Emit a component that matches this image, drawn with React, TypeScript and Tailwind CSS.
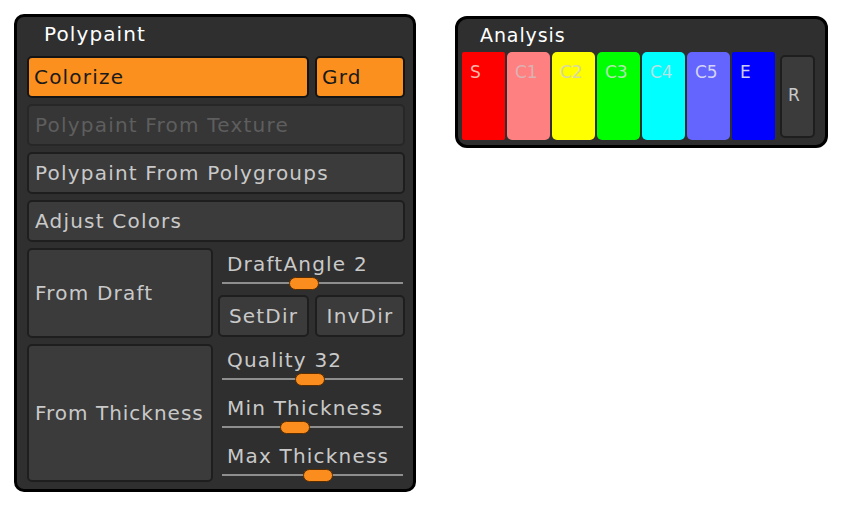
import { ReactNode } from 'react'

const font = { fontFamily: '"DejaVu Sans", Verdana, sans-serif' }

type BtnProps = {
  children: ReactNode
  className?: string
  kind?: 'normal' | 'active' | 'disabled'
}

const kinds = {
  normal: 'border-[#1e1e1e] bg-[#3b3b3b] text-[#c9c9c9]',
  active: 'border-[#141414] bg-[#fb901f] text-[#1a1a1a]',
  disabled: 'border-[#272727] bg-[#363636] text-[#5e5e5e]',
}

const Btn = ({ children, className = '', kind = 'normal' }: BtnProps) => (
  <div
    className={`flex items-center whitespace-nowrap rounded-[5px] border-2 text-[20px] tracking-[1.2px] ${kinds[kind]} ${className}`}
  >
    {children}
  </div>
)

type SliderProps = {
  label: string
  knob: number
}

const Slider = ({ label, knob }: SliderProps) => (
  <div className="flex flex-col">
    <div className="h-[24px] whitespace-nowrap pl-[9px] text-[20px] leading-[24px] tracking-[1.2px] text-[#c9c9c9]">{label}</div>
    <div className="relative h-[14px]">
      <div className="absolute left-[4px] right-[2px] top-[6px] h-[2px] bg-[#8e8e8e]" />
      <div
        className="absolute top-[1px] h-[13px] w-[30px] rounded-full border border-[#5a2e00] bg-[#fb8c1e]"
        style={{ left: knob }}
      />
    </div>
  </div>
)

const swatches = [
  { l: 'S', bg: 'bg-[#ff0000]', fg: 'text-[#ffb4a8]', r: 'rounded-[2px]' },
  { l: 'C1', bg: 'bg-[#ff8080]', fg: 'text-[#dcb2b2]', r: 'rounded-[5px]' },
  { l: 'C2', bg: 'bg-[#ffff00]', fg: 'text-[#d8d8a4]', r: 'rounded-[5px]' },
  { l: 'C3', bg: 'bg-[#00ff00]', fg: 'text-[#b0e6b0]', r: 'rounded-[5px]' },
  { l: 'C4', bg: 'bg-[#00ffff]', fg: 'text-[#b4e4e4]', r: 'rounded-[5px]' },
  { l: 'C5', bg: 'bg-[#6464ff]', fg: 'text-[#d4d4f4]', r: 'rounded-[5px]' },
  { l: 'E', bg: 'bg-[#0000ff]', fg: 'text-[#ccccf4]', r: 'rounded-[2px]' },
]

export default function App() {
  return (
    <div className="flex h-[512px] w-[864px] items-start gap-[39px] bg-white pl-[14px] pt-[14px]" style={font}>
      {/* Polypaint panel */}
      <div className="flex w-[402px] flex-col gap-[6px] rounded-[10px] border-[3px] border-black bg-[#2f2f2f] pb-[7px] pl-[10px] pr-[8px]">
        <div className="h-[33px] pl-[17px] pt-[5px] text-[20px] leading-[24px] tracking-[1.1px] text-white">Polypaint</div>

        <div className="flex gap-[6px]">
          <Btn kind="active" className="h-[42px] w-[282px] px-[5px]">Colorize</Btn>
          <Btn kind="active" className="h-[42px] flex-1 px-[5px]">Grd</Btn>
        </div>

        <Btn kind="disabled" className="h-[42px] px-[6px]">Polypaint From Texture</Btn>
        <Btn className="h-[42px] px-[6px]">Polypaint From Polygroups</Btn>
        <Btn className="h-[42px] px-[6px]">Adjust Colors</Btn>

        <div className="flex gap-[5px]">
          <Btn className="h-[90px] w-[186px] px-[6px]">From Draft</Btn>
          <div className="flex flex-1 flex-col gap-[5px] pt-[4px]">
            <Slider label="DraftAngle 2" knob={71} />
            <div className="flex gap-[6px]">
              <Btn className="h-[42px] w-[91px] justify-center">SetDir</Btn>
              <Btn className="h-[42px] flex-1 justify-center">InvDir</Btn>
            </div>
          </div>
        </div>

        <div className="flex gap-[5px]">
          <Btn className="h-[138px] w-[186px] px-[6px] tracking-[1px]">From Thickness</Btn>
          <div className="flex flex-1 flex-col gap-[10px] pt-[4px]">
            <Slider label="Quality 32" knob={77} />
            <Slider label="Min Thickness" knob={62} />
            <Slider label="Max Thickness" knob={85} />
          </div>
        </div>
      </div>

      {/* Analysis panel */}
      <div className="mt-[2px] flex w-[373px] flex-col rounded-[12px] border-[3px] border-black bg-[#2f2f2f] pb-[5px] pl-[4px] pr-[10px]">
        <div className="h-[33px] pl-[18px] pt-[4px] text-[19px] leading-[24px] tracking-[0.9px] text-white">Analysis</div>
        <div className="flex items-center">
          <div className="flex gap-[2px]">
            {swatches.map((s) => (
              <div
                key={s.l}
                className={`h-[88px] w-[43px] pl-[8px] pt-[9px] text-[17px] leading-[22px] ${s.bg} ${s.fg} ${s.r}`}
              >
                {s.l}
              </div>
            ))}
          </div>
          <div className="ml-[5px] flex h-[83px] flex-1 items-center rounded-[5px] border-2 border-[#1e1e1e] bg-[#3b3b3b] pl-[6px] text-[17px] text-[#c9c9c9]">
            R
          </div>
        </div>
      </div>
    </div>
  )
}
